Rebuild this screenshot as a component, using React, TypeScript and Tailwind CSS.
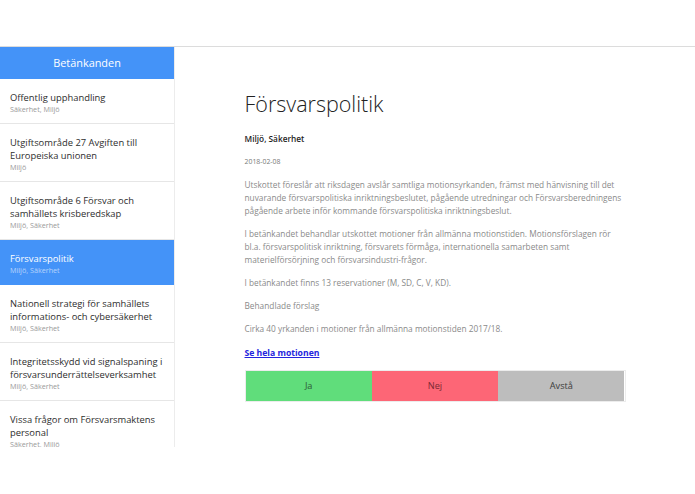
import React from "react";

const items = [
  { title: "Offentlig upphandling", sub: "Säkerhet, Miljö" },
  { title: "Utgiftsområde 27 Avgiften till Europeiska unionen", sub: "Miljö" },
  { title: "Utgiftsområde 6 Försvar och samhällets krisberedskap", sub: "Miljö, Säkerhet" },
  { title: "Försvarspolitik", sub: "Miljö, Säkerhet", active: true },
  { title: "Nationell strategi för samhällets informations- och cybersäkerhet", sub: "Miljö, Säkerhet" },
  { title: "Integritetsskydd vid signalspaning i försvarsunderrättelseverksamhet", sub: "Miljö, Säkerhet" },
  { title: "Vissa frågor om Försvarsmaktens personal", sub: "Säkerhet, Miljö" },
];

export default function App() {
  return (
    <div
      className="w-[695px] h-[494px] bg-white overflow-hidden"
      style={{ fontFamily: '"Open Sans", "Liberation Sans", sans-serif' }}
    >
      <div className="h-[47px] border-b border-[#dcdcdc]" />
      <div className="flex">
        <aside className="w-[175px] h-[400px] overflow-hidden shrink-0 border-r border-[#ececec]">
          <div className="h-[32px] bg-[#4493f8] text-white text-[10.9px] flex items-center justify-center">
            Betänkanden
          </div>
          {items.map((it, i) => (
            <div
              key={i}
              className={
                it.active
                  ? "pt-3 pb-[9px] pl-[10px] pr-2 border-b border-[#4493f8] bg-[#4493f8]"
                  : "pt-3 pb-[9px] pl-[10px] pr-2 border-b border-[#e6e6e6]"
              }
            >
              <div
                className={
                  it.active
                    ? "text-[9.4px] leading-[13px] text-white"
                    : "text-[9.4px] leading-[13px] text-[#2e2e2e]"
                }
              >
                {it.title}
              </div>
              <div
                className={
                  it.active
                    ? "text-[7.2px] leading-[10px] text-white/60"
                    : "text-[7.2px] leading-[10px] text-[#9a9a9a]"
                }
              >
                {it.sub}
              </div>
            </div>
          ))}
        </aside>
        <main className="flex-1">
          <div className="w-[381px] mx-auto pt-[42px]">
            <h1 className="text-[21.5px] font-light leading-[30px] text-[#222222]">Försvarspolitik</h1>
            <div className="mt-[13px] text-[8.3px] font-semibold leading-[13px] text-[#1e1e1e]">Miljö, Säkerhet</div>
            <div className="mt-[10.5px] text-[6.9px] leading-[12px] text-[#777777]">2018-02-08</div>
            <div className="mt-[10.5px] text-[8.3px] leading-[13px] text-[#8a8a8a] flex flex-col gap-[10px]">
              <p>
                Utskottet föreslår att riksdagen avslår samtliga motionsyrkanden, främst med hänvisning till det
                nuvarande försvarspolitiska inriktningsbeslutet, pågående utredningar och Försvarsberedningens
                pågående arbete inför kommande försvarspolitiska inriktningsbeslut.
              </p>
              <p>
                I betänkandet behandlar utskottet motioner från allmänna motionstiden. Motionsförslagen rör
                bl.a. försvarspolitisk inriktning, försvarets förmåga, internationella samarbeten samt
                materielförsörjning och försvarsindustri-frågor.
              </p>
              <p>I betänkandet finns 13 reservationer (M, SD, C, V, KD).</p>
              <p>Behandlade förslag</p>
              <p>Cirka 40 yrkanden i motioner från allmänna motionstiden 2017/18.</p>
            </div>
            <a className="block mt-[12px] text-[8.65px] leading-[13px] font-bold text-[#2424dd] underline">
              Se hela motionen
            </a>
            <div className="mt-[10px] flex h-[32px] border border-[#ececec] text-[9.2px]">
              <div className="flex-1 bg-[#60dd7b] text-[#2f5a38] flex items-center justify-center">Ja</div>
              <div className="flex-1 bg-[#fd6676] text-[#7a2a33] flex items-center justify-center">Nej</div>
              <div className="flex-1 bg-[#bdbdbd] text-[#3c3c3c] flex items-center justify-center">Avstå</div>
            </div>
          </div>
        </main>
      </div>
    </div>
  );
}
